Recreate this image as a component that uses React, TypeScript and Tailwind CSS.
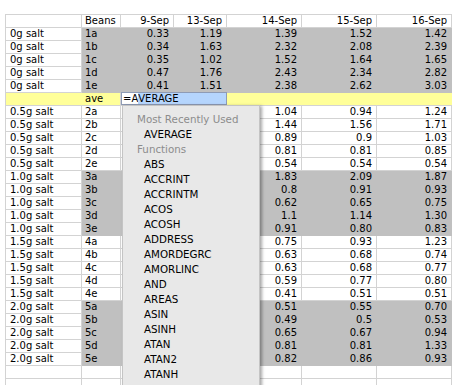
import React from "react";

type Row = { a: string; b: string; c: string; d: string; e: string; f: string; g: string; tone: "white" | "gray" };

const widths = ["w-[76px]", "w-[39px]", "w-[53px]", "w-[53px]", "w-[75px]", "w-[75px]", "w-[75px]"];

const groups: { label: string; n: number; gray: boolean; vals: string[][] }[] = [
  {
    label: "0g salt",
    n: 1,
    gray: true,
    vals: [
      ["0.33", "1.19", "1.39", "1.52", "1.42"],
      ["0.34", "1.63", "2.32", "2.08", "2.39"],
      ["0.35", "1.02", "1.52", "1.64", "1.65"],
      ["0.47", "1.76", "2.43", "2.34", "2.82"],
      ["0.41", "1.51", "2.38", "2.62", "3.03"],
    ],
  },
  {
    label: "0.5g salt",
    n: 2,
    gray: false,
    vals: [
      ["", "", "1.04", "0.94", "1.24"],
      ["", "", "1.44", "1.56", "1.71"],
      ["", "", "0.89", "0.9", "1.03"],
      ["", "", "0.81", "0.81", "0.85"],
      ["", "", "0.54", "0.54", "0.54"],
    ],
  },
  {
    label: "1.0g salt",
    n: 3,
    gray: true,
    vals: [
      ["", "", "1.83", "2.09", "1.87"],
      ["", "", "0.8", "0.91", "0.93"],
      ["", "", "0.62", "0.65", "0.75"],
      ["", "", "1.1", "1.14", "1.30"],
      ["", "", "0.91", "0.80", "0.83"],
    ],
  },
  {
    label: "1.5g salt",
    n: 4,
    gray: false,
    vals: [
      ["", "", "0.75", "0.93", "1.23"],
      ["", "", "0.63", "0.68", "0.74"],
      ["", "", "0.63", "0.68", "0.77"],
      ["", "", "0.59", "0.77", "0.80"],
      ["", "", "0.41", "0.51", "0.51"],
    ],
  },
  {
    label: "2.0g salt",
    n: 5,
    gray: true,
    vals: [
      ["", "", "0.51", "0.55", "0.70"],
      ["", "", "0.49", "0.5", "0.53"],
      ["", "", "0.65", "0.67", "0.94"],
      ["", "", "0.81", "0.81", "1.33"],
      ["", "", "0.82", "0.86", "0.93"],
    ],
  },
];

const letters = ["a", "b", "c", "d", "e"];

function toRows(gs: typeof groups): Row[] {
  const out: Row[] = [];
  gs.forEach((g) =>
    g.vals.forEach((v, i) =>
      out.push({
        a: g.label,
        b: `${g.n}${letters[i]}`,
        c: v[0],
        d: v[1],
        e: v[2],
        f: v[3],
        g: v[4],
        tone: g.gray ? "gray" : "white",
      })
    )
  );
  return out;
}

const functions = [
  "ABS", "ACCRINT", "ACCRINTM", "ACOS", "ACOSH", "ADDRESS", "AMORDEGRC",
  "AMORLINC", "AND", "AREAS", "ASIN", "ASINH", "ATAN", "ATAN2", "ATANH",
];

function Cell({ i, text, gray, right }: { i: number; text: string; gray?: boolean; right?: boolean }) {
  const base = `${widths[i]} h-[13px] shrink-0 border-r border-b leading-[12px] whitespace-nowrap overflow-hidden`;
  const tone = gray && i > 0 ? "bg-[#c0c0c0] border-[#c0c0c0]" : "bg-white border-[#d3d3d3]";
  const align = right ? "text-right pr-[4px]" : i === 0 ? "pl-[4px]" : "pl-[3px]";
  return <div className={`${base} ${tone} ${align}`}>{text}</div>;
}

function DataRow({ r }: { r: Row }) {
  const gray = r.tone === "gray";
  return (
    <div className="flex">
      <Cell i={0} text={r.a} />
      <Cell i={1} text={r.b} gray={gray} />
      <Cell i={2} text={r.c} gray={gray} right />
      <Cell i={3} text={r.d} gray={gray} right />
      <Cell i={4} text={r.e} gray={gray} right />
      <Cell i={5} text={r.f} gray={gray} right />
      <Cell i={6} text={r.g} gray={gray} right />
    </div>
  );
}

export default function App() {
  const rows = toRows(groups);
  const top = rows.slice(0, 5);
  const rest = rows.slice(5);

  return (
    <div
      className="relative w-[469px] h-[385px] overflow-hidden bg-white text-[10px] text-black"
      style={{ fontFamily: '"DejaVu Sans", Verdana, sans-serif' }}
    >
      <div className="pl-[5px] pt-[14px]">
        <div className="inline-flex flex-col border-l border-t border-[#d3d3d3]">
          {/* header */}
          <div className="flex">
            <Cell i={0} text="" />
            <Cell i={1} text="Beans" />
            <Cell i={2} text="9-Sep" right />
            <Cell i={3} text="13-Sep" right />
            <Cell i={4} text="14-Sep" right />
            <Cell i={5} text="15-Sep" right />
            <Cell i={6} text="16-Sep" right />
          </div>

          {top.map((r) => (
            <DataRow key={r.b} r={r} />
          ))}

          {/* average row being edited */}
          <div className="flex h-[13px] bg-[#ffff99] leading-[12px] border-b border-[#d3d3d3]">
            <div className="w-[76px] shrink-0" />
            <div className="w-[39px] shrink-0 pl-[3px] border-r border-[#d3d3d3]">ave</div>
            <div className="w-[106px] shrink-0 h-[13px] -mt-px flex border border-[#8e9bb5] bg-white leading-[11px]">
              <span className="pl-[1px]">=A</span>
              <span className="flex-1 bg-[#b5d5fd]">VERAGE</span>
            </div>
            <div className="w-[75px] shrink-0" />
            <div className="w-[75px] shrink-0" />
            <div className="w-[75px] shrink-0" />
          </div>

          {rest.map((r) => (
            <DataRow key={r.b} r={r} />
          ))}

          {[0, 1].map((k) => (
            <div key={k} className="flex">
              {widths.map((_, i) => (
                <Cell key={i} i={i} text="" />
              ))}
            </div>
          ))}
        </div>
      </div>

      {/* autocomplete list */}
      <div className="absolute left-[122px] top-[105px] w-[138px] h-[300px] bg-[#e8e8e8] border border-[#c4c4c4] shadow-[2px_1px_3px_rgba(0,0,0,0.35)] pt-[6px] leading-[15px] text-[10.3px] text-black">
        <div className="pl-[14px] text-[#8c8c8c]">Most Recently Used</div>
        <div className="pl-[21px]">AVERAGE</div>
        <div className="pl-[14px] text-[#8c8c8c]">Functions</div>
        {functions.map((f) => (
          <div key={f} className="pl-[21px]">
            {f}
          </div>
        ))}
      </div>
    </div>
  );
}
